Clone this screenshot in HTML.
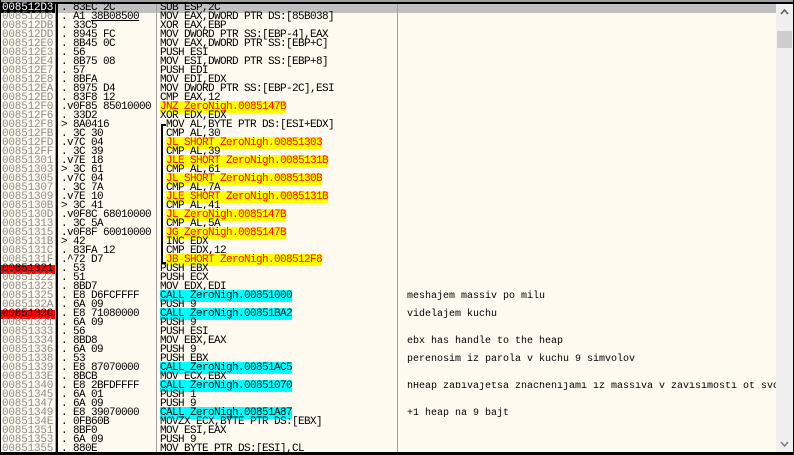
<!DOCTYPE html>
<html><head><meta charset="utf-8"><style>
*{margin:0;padding:0}
body{width:794px;height:455px;overflow:hidden;background:#fffaf0;position:relative;font-family:"Liberation Mono",monospace;font-size:11px;letter-spacing:-0.6px;}
.a{position:absolute;height:9px;line-height:9px;white-space:pre;}
.ad{left:1px;width:53px;color:#8c8c8c;padding-left:1px;letter-spacing:-0.2px}
.hx{left:61px;color:#000}
.ds{left:160px;color:#000}
.cm{left:407px;color:#000;font-size:10px;letter-spacing:0;line-height:9px}
.j{background:#ffff00;color:#f00}
.c{background:#00ffff}
.v{position:absolute;}
</style></head><body>
<div class="v" style="left:0;top:0;width:794px;height:2px;background:#a0a0a0"></div>
<div class="v" style="left:0;top:2px;width:794px;height:2px;background:#000"></div>
<div class="v" style="left:57px;top:4px;width:719px;height:9px;background:#c0c0c0"></div>
<div class="v" style="left:0;top:0;width:1px;height:455px;background:#000"></div>
<div class="v" style="left:55px;top:4px;width:1px;height:450px;background:#a0a0a0"></div>
<div class="v" style="left:56px;top:4px;width:2px;height:450px;background:#000"></div>
<div class="v" style="left:156px;top:4px;width:1px;height:450px;background:#a0a0a0"></div>
<div class="v" style="left:397px;top:4px;width:1px;height:450px;background:#a0a0a0"></div>
<div class="v" style="left:776px;top:4px;width:17px;height:448px;background:#f0f0f0"></div>
<div class="v" style="left:777px;top:31px;width:15px;height:17px;background:#cdcdcd"></div>
<svg class="v" style="left:780px;top:9px" width="9" height="6"><path d="M1 5 L4.5 1 L8 5" stroke="#606060" stroke-width="1.6" fill="none"/></svg>
<svg class="v" style="left:780px;top:441px" width="9" height="6"><path d="M1 1 L4.5 5 L8 1" stroke="#808080" stroke-width="1.6" fill="none"/></svg>
<div class="v" style="left:161px;top:124px;width:2px;height:140px;background:#000"></div>
<div class="v" style="left:161px;top:124px;width:5px;height:2px;background:#000"></div>
<div class="v" style="left:161px;top:262px;width:5px;height:2px;background:#000"></div>
<div class="a ad" style="top:4px;background:#000;color:#fff">008512D3</div><div class="a hx" style="top:4px">. 83EC 2C</div><div class="a ds" style="top:4px">SUB ESP,2C</div>
<div class="a ad" style="top:13px">008512D6</div><div class="a hx" style="top:13px">. A1 <u>38B08500</u></div><div class="a ds" style="top:13px">MOV EAX,DWORD PTR DS:[85B038]</div>
<div class="a ad" style="top:22px">008512DB</div><div class="a hx" style="top:22px">. 33C5</div><div class="a ds" style="top:22px">XOR EAX,EBP</div>
<div class="a ad" style="top:31px">008512DD</div><div class="a hx" style="top:31px">. 8945 FC</div><div class="a ds" style="top:31px">MOV DWORD PTR SS:[EBP-4],EAX</div>
<div class="a ad" style="top:40px">008512E0</div><div class="a hx" style="top:40px">. 8B45 0C</div><div class="a ds" style="top:40px">MOV EAX,DWORD PTR SS:[EBP+C]</div>
<div class="a ad" style="top:49px">008512E3</div><div class="a hx" style="top:49px">. 56</div><div class="a ds" style="top:49px">PUSH ESI</div>
<div class="a ad" style="top:58px">008512E4</div><div class="a hx" style="top:58px">. 8B75 08</div><div class="a ds" style="top:58px">MOV ESI,DWORD PTR SS:[EBP+8]</div>
<div class="a ad" style="top:67px">008512E7</div><div class="a hx" style="top:67px">. 57</div><div class="a ds" style="top:67px">PUSH EDI</div>
<div class="a ad" style="top:76px">008512E8</div><div class="a hx" style="top:76px">. 8BFA</div><div class="a ds" style="top:76px">MOV EDI,EDX</div>
<div class="a ad" style="top:85px">008512EA</div><div class="a hx" style="top:85px">. 8975 D4</div><div class="a ds" style="top:85px">MOV DWORD PTR SS:[EBP-2C],ESI</div>
<div class="a ad" style="top:94px">008512ED</div><div class="a hx" style="top:94px">. 83F8 12</div><div class="a ds" style="top:94px">CMP EAX,12</div>
<div class="a ad" style="top:103px">008512F0</div><div class="a hx" style="top:103px">.v0F85 85010000</div><div class="a ds" style="top:103px"><span class="j">JNZ ZeroNigh.0085147B</span></div>
<div class="a ad" style="top:112px">008512F6</div><div class="a hx" style="top:112px">. 33D2</div><div class="a ds" style="top:112px">XOR EDX,EDX</div>
<div class="a ad" style="top:121px">008512F8</div><div class="a hx" style="top:121px">&gt; 8A0416</div><div class="a ds" style="top:121px;left:166px">MOV AL,BYTE PTR DS:[ESI+EDX]</div>
<div class="a ad" style="top:130px">008512FB</div><div class="a hx" style="top:130px">. 3C 30</div><div class="a ds" style="top:130px;left:166px">CMP AL,30</div>
<div class="a ad" style="top:139px">008512FD</div><div class="a hx" style="top:139px">.v7C 04</div><div class="a ds" style="top:139px;left:166px"><span class="j">JL SHORT ZeroNigh.00851303</span></div>
<div class="a ad" style="top:148px">008512FF</div><div class="a hx" style="top:148px">. 3C 39</div><div class="a ds" style="top:148px;left:166px">CMP AL,39</div>
<div class="a ad" style="top:157px">00851301</div><div class="a hx" style="top:157px">.v7E 18</div><div class="a ds" style="top:157px;left:166px"><span class="j">JLE SHORT ZeroNigh.0085131B</span></div>
<div class="a ad" style="top:166px">00851303</div><div class="a hx" style="top:166px">&gt; 3C 61</div><div class="a ds" style="top:166px;left:166px">CMP AL,61</div>
<div class="a ad" style="top:175px">00851305</div><div class="a hx" style="top:175px">.v7C 04</div><div class="a ds" style="top:175px;left:166px"><span class="j">JL SHORT ZeroNigh.0085130B</span></div>
<div class="a ad" style="top:184px">00851307</div><div class="a hx" style="top:184px">. 3C 7A</div><div class="a ds" style="top:184px;left:166px">CMP AL,7A</div>
<div class="a ad" style="top:193px">00851309</div><div class="a hx" style="top:193px">.v7E 10</div><div class="a ds" style="top:193px;left:166px"><span class="j">JLE SHORT ZeroNigh.0085131B</span></div>
<div class="a ad" style="top:202px">0085130B</div><div class="a hx" style="top:202px">&gt; 3C 41</div><div class="a ds" style="top:202px;left:166px">CMP AL,41</div>
<div class="a ad" style="top:211px">0085130D</div><div class="a hx" style="top:211px">.v0F8C 68010000</div><div class="a ds" style="top:211px;left:166px"><span class="j">JL ZeroNigh.0085147B</span></div>
<div class="a ad" style="top:220px">00851313</div><div class="a hx" style="top:220px">. 3C 5A</div><div class="a ds" style="top:220px;left:166px">CMP AL,5A</div>
<div class="a ad" style="top:229px">00851315</div><div class="a hx" style="top:229px">.v0F8F 60010000</div><div class="a ds" style="top:229px;left:166px"><span class="j">JG ZeroNigh.0085147B</span></div>
<div class="a ad" style="top:238px">0085131B</div><div class="a hx" style="top:238px">&gt; 42</div><div class="a ds" style="top:238px;left:166px">INC EDX</div>
<div class="a ad" style="top:247px">0085131C</div><div class="a hx" style="top:247px">. 83FA 12</div><div class="a ds" style="top:247px;left:166px">CMP EDX,12</div>
<div class="a ad" style="top:256px">0085131F</div><div class="a hx" style="top:256px">.^72 D7</div><div class="a ds" style="top:256px;left:166px"><span class="j">JB SHORT ZeroNigh.008512F8</span></div>
<div class="a ad" style="top:265px;background:#f00;color:#000">00851321</div><div class="a hx" style="top:265px">. 53</div><div class="a ds" style="top:265px">PUSH EBX</div>
<div class="a ad" style="top:274px">00851322</div><div class="a hx" style="top:274px">. 51</div><div class="a ds" style="top:274px">PUSH ECX</div>
<div class="a ad" style="top:283px">00851323</div><div class="a hx" style="top:283px">. 8BD7</div><div class="a ds" style="top:283px">MOV EDX,EDI</div>
<div class="a ad" style="top:292px">00851325</div><div class="a hx" style="top:292px">. E8 D6FCFFFF</div><div class="a ds" style="top:292px"><span class="c">CALL ZeroNigh.00851000</span></div><div class="a cm" style="top:292px">meshajem massiv po milu</div>
<div class="a ad" style="top:301px">0085132A</div><div class="a hx" style="top:301px">. 6A 09</div><div class="a ds" style="top:301px">PUSH 9</div>
<div class="a ad" style="top:310px;background:#f00;color:#000">0085132C</div><div class="a hx" style="top:310px">. E8 71080000</div><div class="a ds" style="top:310px"><span class="c">CALL ZeroNigh.00851BA2</span></div><div class="a cm" style="top:310px">videlajem kuchu</div>
<div class="a ad" style="top:319px">00851331</div><div class="a hx" style="top:319px">. 6A 09</div><div class="a ds" style="top:319px">PUSH 9</div>
<div class="a ad" style="top:328px">00851333</div><div class="a hx" style="top:328px">. 56</div><div class="a ds" style="top:328px">PUSH ESI</div>
<div class="a ad" style="top:337px">00851334</div><div class="a hx" style="top:337px">. 8BD8</div><div class="a ds" style="top:337px">MOV EBX,EAX</div><div class="a cm" style="top:337px">ebx has handle to the heap</div>
<div class="a ad" style="top:346px">00851336</div><div class="a hx" style="top:346px">. 6A 09</div><div class="a ds" style="top:346px">PUSH 9</div>
<div class="a ad" style="top:355px">00851338</div><div class="a hx" style="top:355px">. 53</div><div class="a ds" style="top:355px">PUSH EBX</div><div class="a cm" style="top:355px">perenosim iz parola v kuchu 9 simvolov</div>
<div class="a ad" style="top:364px">00851339</div><div class="a hx" style="top:364px">. E8 87070000</div><div class="a ds" style="top:364px"><span class="c">CALL ZeroNigh.00851AC5</span></div>
<div class="a ad" style="top:373px">0085133E</div><div class="a hx" style="top:373px">. 8BCB</div><div class="a ds" style="top:373px">MOV ECX,EBX</div>
<div class="a ad" style="top:382px">00851340</div><div class="a hx" style="top:382px">. E8 2BFDFFFF</div><div class="a ds" style="top:382px"><span class="c">CALL ZeroNigh.00851070</span></div><div class="a cm" style="top:382px;width:369px;overflow:hidden;height:11px">hHeap zabivajetsa znachenijami iz massiva v zavisimosti ot svoego</div>
<div class="a ad" style="top:391px">00851345</div><div class="a hx" style="top:391px">. 6A 01</div><div class="a ds" style="top:391px">PUSH 1</div>
<div class="a ad" style="top:400px">00851347</div><div class="a hx" style="top:400px">. 6A 09</div><div class="a ds" style="top:400px">PUSH 9</div>
<div class="a ad" style="top:409px">00851349</div><div class="a hx" style="top:409px">. E8 39070000</div><div class="a ds" style="top:409px"><span class="c">CALL ZeroNigh.00851A87</span></div><div class="a cm" style="top:409px">+1 heap na 9 bajt</div>
<div class="a ad" style="top:418px">0085134E</div><div class="a hx" style="top:418px">. 0FB60B</div><div class="a ds" style="top:418px">MOVZX ECX,BYTE PTR DS:[EBX]</div>
<div class="a ad" style="top:427px">00851351</div><div class="a hx" style="top:427px">. 8BF0</div><div class="a ds" style="top:427px">MOV ESI,EAX</div>
<div class="a ad" style="top:436px">00851353</div><div class="a hx" style="top:436px">. 6A 09</div><div class="a ds" style="top:436px">PUSH 9</div>
<div class="a ad" style="top:445px">00851355</div><div class="a hx" style="top:445px">. 880E</div><div class="a ds" style="top:445px">MOV BYTE PTR DS:[ESI],CL</div>
<div class="v" style="left:793px;top:0;width:1px;height:455px;background:#000"></div>
<div class="v" style="left:0;top:452px;width:794px;height:3px;background:#000"></div>
</body></html>
